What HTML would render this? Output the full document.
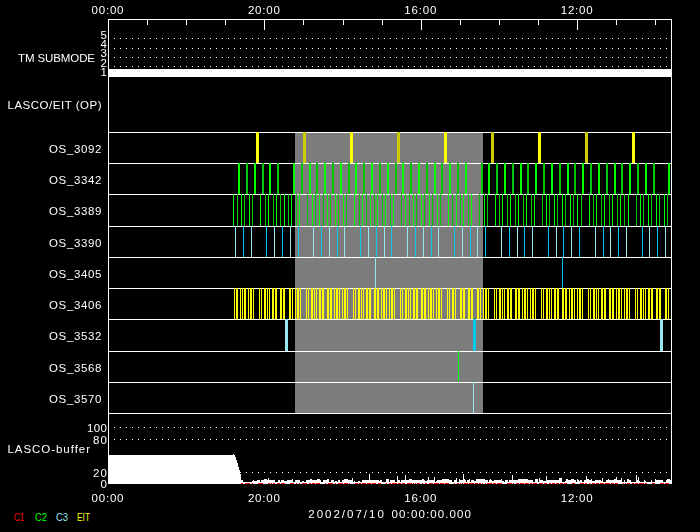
<!DOCTYPE html>
<html><head><meta charset="utf-8"><title>LASCO/EIT schedule</title>
<style>html,body{margin:0;padding:0;background:#000;overflow:hidden}svg{display:block}text{font-family:"Liberation Sans",sans-serif;font-size:11.5px;fill:#fff}</style></head>
<body>
<svg width="700" height="532" viewBox="0 0 700 532">
<rect width="700" height="532" fill="#000"/>
<g shape-rendering="crispEdges">
<rect x="295" y="132" width="188" height="282" fill="#7c7c7c"/>
<rect x="108" y="132" width="564" height="1" fill="#fff"/>
<rect x="108" y="163" width="564" height="1" fill="#fff"/>
<rect x="108" y="194" width="564" height="1" fill="#fff"/>
<rect x="108" y="226" width="564" height="1" fill="#fff"/>
<rect x="108" y="257" width="564" height="1" fill="#fff"/>
<rect x="108" y="288" width="564" height="1" fill="#fff"/>
<rect x="108" y="319" width="564" height="1" fill="#fff"/>
<rect x="108" y="351" width="564" height="1" fill="#fff"/>
<rect x="108" y="382" width="564" height="1" fill="#fff"/>
<rect x="108" y="413" width="564" height="1" fill="#fff"/>
<path fill="#fff" d="M114 38h1v1h-1zM120 38h1v1h-1zM126 38h1v1h-1zM132 38h1v1h-1zM138 38h1v1h-1zM144 38h1v1h-1zM150 38h1v1h-1zM156 38h1v1h-1zM162 38h1v1h-1zM168 38h1v1h-1zM174 38h1v1h-1zM180 38h1v1h-1zM186 38h1v1h-1zM192 38h1v1h-1zM198 38h1v1h-1zM204 38h1v1h-1zM210 38h1v1h-1zM216 38h1v1h-1zM222 38h1v1h-1zM228 38h1v1h-1zM234 38h1v1h-1zM240 38h1v1h-1zM246 38h1v1h-1zM252 38h1v1h-1zM258 38h1v1h-1zM264 38h1v1h-1zM270 38h1v1h-1zM276 38h1v1h-1zM282 38h1v1h-1zM288 38h1v1h-1zM294 38h1v1h-1zM300 38h1v1h-1zM306 38h1v1h-1zM312 38h1v1h-1zM318 38h1v1h-1zM324 38h1v1h-1zM330 38h1v1h-1zM336 38h1v1h-1zM342 38h1v1h-1zM348 38h1v1h-1zM354 38h1v1h-1zM360 38h1v1h-1zM366 38h1v1h-1zM372 38h1v1h-1zM378 38h1v1h-1zM384 38h1v1h-1zM390 38h1v1h-1zM396 38h1v1h-1zM402 38h1v1h-1zM408 38h1v1h-1zM414 38h1v1h-1zM420 38h1v1h-1zM426 38h1v1h-1zM432 38h1v1h-1zM438 38h1v1h-1zM444 38h1v1h-1zM450 38h1v1h-1zM456 38h1v1h-1zM462 38h1v1h-1zM468 38h1v1h-1zM474 38h1v1h-1zM480 38h1v1h-1zM486 38h1v1h-1zM492 38h1v1h-1zM498 38h1v1h-1zM504 38h1v1h-1zM510 38h1v1h-1zM516 38h1v1h-1zM522 38h1v1h-1zM528 38h1v1h-1zM534 38h1v1h-1zM540 38h1v1h-1zM546 38h1v1h-1zM552 38h1v1h-1zM558 38h1v1h-1zM564 38h1v1h-1zM570 38h1v1h-1zM576 38h1v1h-1zM582 38h1v1h-1zM588 38h1v1h-1zM594 38h1v1h-1zM600 38h1v1h-1zM606 38h1v1h-1zM612 38h1v1h-1zM618 38h1v1h-1zM624 38h1v1h-1zM630 38h1v1h-1zM636 38h1v1h-1zM642 38h1v1h-1zM648 38h1v1h-1zM654 38h1v1h-1zM660 38h1v1h-1zM666 38h1v1h-1zM114 48h1v1h-1zM120 48h1v1h-1zM126 48h1v1h-1zM132 48h1v1h-1zM138 48h1v1h-1zM144 48h1v1h-1zM150 48h1v1h-1zM156 48h1v1h-1zM162 48h1v1h-1zM168 48h1v1h-1zM174 48h1v1h-1zM180 48h1v1h-1zM186 48h1v1h-1zM192 48h1v1h-1zM198 48h1v1h-1zM204 48h1v1h-1zM210 48h1v1h-1zM216 48h1v1h-1zM222 48h1v1h-1zM228 48h1v1h-1zM234 48h1v1h-1zM240 48h1v1h-1zM246 48h1v1h-1zM252 48h1v1h-1zM258 48h1v1h-1zM264 48h1v1h-1zM270 48h1v1h-1zM276 48h1v1h-1zM282 48h1v1h-1zM288 48h1v1h-1zM294 48h1v1h-1zM300 48h1v1h-1zM306 48h1v1h-1zM312 48h1v1h-1zM318 48h1v1h-1zM324 48h1v1h-1zM330 48h1v1h-1zM336 48h1v1h-1zM342 48h1v1h-1zM348 48h1v1h-1zM354 48h1v1h-1zM360 48h1v1h-1zM366 48h1v1h-1zM372 48h1v1h-1zM378 48h1v1h-1zM384 48h1v1h-1zM390 48h1v1h-1zM396 48h1v1h-1zM402 48h1v1h-1zM408 48h1v1h-1zM414 48h1v1h-1zM420 48h1v1h-1zM426 48h1v1h-1zM432 48h1v1h-1zM438 48h1v1h-1zM444 48h1v1h-1zM450 48h1v1h-1zM456 48h1v1h-1zM462 48h1v1h-1zM468 48h1v1h-1zM474 48h1v1h-1zM480 48h1v1h-1zM486 48h1v1h-1zM492 48h1v1h-1zM498 48h1v1h-1zM504 48h1v1h-1zM510 48h1v1h-1zM516 48h1v1h-1zM522 48h1v1h-1zM528 48h1v1h-1zM534 48h1v1h-1zM540 48h1v1h-1zM546 48h1v1h-1zM552 48h1v1h-1zM558 48h1v1h-1zM564 48h1v1h-1zM570 48h1v1h-1zM576 48h1v1h-1zM582 48h1v1h-1zM588 48h1v1h-1zM594 48h1v1h-1zM600 48h1v1h-1zM606 48h1v1h-1zM612 48h1v1h-1zM618 48h1v1h-1zM624 48h1v1h-1zM630 48h1v1h-1zM636 48h1v1h-1zM642 48h1v1h-1zM648 48h1v1h-1zM654 48h1v1h-1zM660 48h1v1h-1zM666 48h1v1h-1zM114 57h1v1h-1zM120 57h1v1h-1zM126 57h1v1h-1zM132 57h1v1h-1zM138 57h1v1h-1zM144 57h1v1h-1zM150 57h1v1h-1zM156 57h1v1h-1zM162 57h1v1h-1zM168 57h1v1h-1zM174 57h1v1h-1zM180 57h1v1h-1zM186 57h1v1h-1zM192 57h1v1h-1zM198 57h1v1h-1zM204 57h1v1h-1zM210 57h1v1h-1zM216 57h1v1h-1zM222 57h1v1h-1zM228 57h1v1h-1zM234 57h1v1h-1zM240 57h1v1h-1zM246 57h1v1h-1zM252 57h1v1h-1zM258 57h1v1h-1zM264 57h1v1h-1zM270 57h1v1h-1zM276 57h1v1h-1zM282 57h1v1h-1zM288 57h1v1h-1zM294 57h1v1h-1zM300 57h1v1h-1zM306 57h1v1h-1zM312 57h1v1h-1zM318 57h1v1h-1zM324 57h1v1h-1zM330 57h1v1h-1zM336 57h1v1h-1zM342 57h1v1h-1zM348 57h1v1h-1zM354 57h1v1h-1zM360 57h1v1h-1zM366 57h1v1h-1zM372 57h1v1h-1zM378 57h1v1h-1zM384 57h1v1h-1zM390 57h1v1h-1zM396 57h1v1h-1zM402 57h1v1h-1zM408 57h1v1h-1zM414 57h1v1h-1zM420 57h1v1h-1zM426 57h1v1h-1zM432 57h1v1h-1zM438 57h1v1h-1zM444 57h1v1h-1zM450 57h1v1h-1zM456 57h1v1h-1zM462 57h1v1h-1zM468 57h1v1h-1zM474 57h1v1h-1zM480 57h1v1h-1zM486 57h1v1h-1zM492 57h1v1h-1zM498 57h1v1h-1zM504 57h1v1h-1zM510 57h1v1h-1zM516 57h1v1h-1zM522 57h1v1h-1zM528 57h1v1h-1zM534 57h1v1h-1zM540 57h1v1h-1zM546 57h1v1h-1zM552 57h1v1h-1zM558 57h1v1h-1zM564 57h1v1h-1zM570 57h1v1h-1zM576 57h1v1h-1zM582 57h1v1h-1zM588 57h1v1h-1zM594 57h1v1h-1zM600 57h1v1h-1zM606 57h1v1h-1zM612 57h1v1h-1zM618 57h1v1h-1zM624 57h1v1h-1zM630 57h1v1h-1zM636 57h1v1h-1zM642 57h1v1h-1zM648 57h1v1h-1zM654 57h1v1h-1zM660 57h1v1h-1zM666 57h1v1h-1zM114 66h1v1h-1zM120 66h1v1h-1zM126 66h1v1h-1zM132 66h1v1h-1zM138 66h1v1h-1zM144 66h1v1h-1zM150 66h1v1h-1zM156 66h1v1h-1zM162 66h1v1h-1zM168 66h1v1h-1zM174 66h1v1h-1zM180 66h1v1h-1zM186 66h1v1h-1zM192 66h1v1h-1zM198 66h1v1h-1zM204 66h1v1h-1zM210 66h1v1h-1zM216 66h1v1h-1zM222 66h1v1h-1zM228 66h1v1h-1zM234 66h1v1h-1zM240 66h1v1h-1zM246 66h1v1h-1zM252 66h1v1h-1zM258 66h1v1h-1zM264 66h1v1h-1zM270 66h1v1h-1zM276 66h1v1h-1zM282 66h1v1h-1zM288 66h1v1h-1zM294 66h1v1h-1zM300 66h1v1h-1zM306 66h1v1h-1zM312 66h1v1h-1zM318 66h1v1h-1zM324 66h1v1h-1zM330 66h1v1h-1zM336 66h1v1h-1zM342 66h1v1h-1zM348 66h1v1h-1zM354 66h1v1h-1zM360 66h1v1h-1zM366 66h1v1h-1zM372 66h1v1h-1zM378 66h1v1h-1zM384 66h1v1h-1zM390 66h1v1h-1zM396 66h1v1h-1zM402 66h1v1h-1zM408 66h1v1h-1zM414 66h1v1h-1zM420 66h1v1h-1zM426 66h1v1h-1zM432 66h1v1h-1zM438 66h1v1h-1zM444 66h1v1h-1zM450 66h1v1h-1zM456 66h1v1h-1zM462 66h1v1h-1zM468 66h1v1h-1zM474 66h1v1h-1zM480 66h1v1h-1zM486 66h1v1h-1zM492 66h1v1h-1zM498 66h1v1h-1zM504 66h1v1h-1zM510 66h1v1h-1zM516 66h1v1h-1zM522 66h1v1h-1zM528 66h1v1h-1zM534 66h1v1h-1zM540 66h1v1h-1zM546 66h1v1h-1zM552 66h1v1h-1zM558 66h1v1h-1zM564 66h1v1h-1zM570 66h1v1h-1zM576 66h1v1h-1zM582 66h1v1h-1zM588 66h1v1h-1zM594 66h1v1h-1zM600 66h1v1h-1zM606 66h1v1h-1zM612 66h1v1h-1zM618 66h1v1h-1zM624 66h1v1h-1zM630 66h1v1h-1zM636 66h1v1h-1zM642 66h1v1h-1zM648 66h1v1h-1zM654 66h1v1h-1zM660 66h1v1h-1zM666 66h1v1h-1zM114 427h1v1h-1zM120 427h1v1h-1zM126 427h1v1h-1zM132 427h1v1h-1zM138 427h1v1h-1zM144 427h1v1h-1zM150 427h1v1h-1zM156 427h1v1h-1zM162 427h1v1h-1zM168 427h1v1h-1zM174 427h1v1h-1zM180 427h1v1h-1zM186 427h1v1h-1zM192 427h1v1h-1zM198 427h1v1h-1zM204 427h1v1h-1zM210 427h1v1h-1zM216 427h1v1h-1zM222 427h1v1h-1zM228 427h1v1h-1zM234 427h1v1h-1zM240 427h1v1h-1zM246 427h1v1h-1zM252 427h1v1h-1zM258 427h1v1h-1zM264 427h1v1h-1zM270 427h1v1h-1zM276 427h1v1h-1zM282 427h1v1h-1zM288 427h1v1h-1zM294 427h1v1h-1zM300 427h1v1h-1zM306 427h1v1h-1zM312 427h1v1h-1zM318 427h1v1h-1zM324 427h1v1h-1zM330 427h1v1h-1zM336 427h1v1h-1zM342 427h1v1h-1zM348 427h1v1h-1zM354 427h1v1h-1zM360 427h1v1h-1zM366 427h1v1h-1zM372 427h1v1h-1zM378 427h1v1h-1zM384 427h1v1h-1zM390 427h1v1h-1zM396 427h1v1h-1zM402 427h1v1h-1zM408 427h1v1h-1zM414 427h1v1h-1zM420 427h1v1h-1zM426 427h1v1h-1zM432 427h1v1h-1zM438 427h1v1h-1zM444 427h1v1h-1zM450 427h1v1h-1zM456 427h1v1h-1zM462 427h1v1h-1zM468 427h1v1h-1zM474 427h1v1h-1zM480 427h1v1h-1zM486 427h1v1h-1zM492 427h1v1h-1zM498 427h1v1h-1zM504 427h1v1h-1zM510 427h1v1h-1zM516 427h1v1h-1zM522 427h1v1h-1zM528 427h1v1h-1zM534 427h1v1h-1zM540 427h1v1h-1zM546 427h1v1h-1zM552 427h1v1h-1zM558 427h1v1h-1zM564 427h1v1h-1zM570 427h1v1h-1zM576 427h1v1h-1zM582 427h1v1h-1zM588 427h1v1h-1zM594 427h1v1h-1zM600 427h1v1h-1zM606 427h1v1h-1zM612 427h1v1h-1zM618 427h1v1h-1zM624 427h1v1h-1zM630 427h1v1h-1zM636 427h1v1h-1zM642 427h1v1h-1zM648 427h1v1h-1zM654 427h1v1h-1zM660 427h1v1h-1zM666 427h1v1h-1zM114 439h1v1h-1zM120 439h1v1h-1zM126 439h1v1h-1zM132 439h1v1h-1zM138 439h1v1h-1zM144 439h1v1h-1zM150 439h1v1h-1zM156 439h1v1h-1zM162 439h1v1h-1zM168 439h1v1h-1zM174 439h1v1h-1zM180 439h1v1h-1zM186 439h1v1h-1zM192 439h1v1h-1zM198 439h1v1h-1zM204 439h1v1h-1zM210 439h1v1h-1zM216 439h1v1h-1zM222 439h1v1h-1zM228 439h1v1h-1zM234 439h1v1h-1zM240 439h1v1h-1zM246 439h1v1h-1zM252 439h1v1h-1zM258 439h1v1h-1zM264 439h1v1h-1zM270 439h1v1h-1zM276 439h1v1h-1zM282 439h1v1h-1zM288 439h1v1h-1zM294 439h1v1h-1zM300 439h1v1h-1zM306 439h1v1h-1zM312 439h1v1h-1zM318 439h1v1h-1zM324 439h1v1h-1zM330 439h1v1h-1zM336 439h1v1h-1zM342 439h1v1h-1zM348 439h1v1h-1zM354 439h1v1h-1zM360 439h1v1h-1zM366 439h1v1h-1zM372 439h1v1h-1zM378 439h1v1h-1zM384 439h1v1h-1zM390 439h1v1h-1zM396 439h1v1h-1zM402 439h1v1h-1zM408 439h1v1h-1zM414 439h1v1h-1zM420 439h1v1h-1zM426 439h1v1h-1zM432 439h1v1h-1zM438 439h1v1h-1zM444 439h1v1h-1zM450 439h1v1h-1zM456 439h1v1h-1zM462 439h1v1h-1zM468 439h1v1h-1zM474 439h1v1h-1zM480 439h1v1h-1zM486 439h1v1h-1zM492 439h1v1h-1zM498 439h1v1h-1zM504 439h1v1h-1zM510 439h1v1h-1zM516 439h1v1h-1zM522 439h1v1h-1zM528 439h1v1h-1zM534 439h1v1h-1zM540 439h1v1h-1zM546 439h1v1h-1zM552 439h1v1h-1zM558 439h1v1h-1zM564 439h1v1h-1zM570 439h1v1h-1zM576 439h1v1h-1zM582 439h1v1h-1zM588 439h1v1h-1zM594 439h1v1h-1zM600 439h1v1h-1zM606 439h1v1h-1zM612 439h1v1h-1zM618 439h1v1h-1zM624 439h1v1h-1zM630 439h1v1h-1zM636 439h1v1h-1zM642 439h1v1h-1zM648 439h1v1h-1zM654 439h1v1h-1zM660 439h1v1h-1zM666 439h1v1h-1zM240 472h1v1h-1zM246 472h1v1h-1zM252 472h1v1h-1zM258 472h1v1h-1zM264 472h1v1h-1zM270 472h1v1h-1zM276 472h1v1h-1zM282 472h1v1h-1zM288 472h1v1h-1zM294 472h1v1h-1zM300 472h1v1h-1zM306 472h1v1h-1zM312 472h1v1h-1zM318 472h1v1h-1zM324 472h1v1h-1zM330 472h1v1h-1zM336 472h1v1h-1zM342 472h1v1h-1zM348 472h1v1h-1zM354 472h1v1h-1zM360 472h1v1h-1zM366 472h1v1h-1zM372 472h1v1h-1zM378 472h1v1h-1zM384 472h1v1h-1zM390 472h1v1h-1zM396 472h1v1h-1zM402 472h1v1h-1zM408 472h1v1h-1zM414 472h1v1h-1zM420 472h1v1h-1zM426 472h1v1h-1zM432 472h1v1h-1zM438 472h1v1h-1zM444 472h1v1h-1zM450 472h1v1h-1zM456 472h1v1h-1zM462 472h1v1h-1zM468 472h1v1h-1zM474 472h1v1h-1zM480 472h1v1h-1zM486 472h1v1h-1zM492 472h1v1h-1zM498 472h1v1h-1zM504 472h1v1h-1zM510 472h1v1h-1zM516 472h1v1h-1zM522 472h1v1h-1zM528 472h1v1h-1zM534 472h1v1h-1zM540 472h1v1h-1zM546 472h1v1h-1zM552 472h1v1h-1zM558 472h1v1h-1zM564 472h1v1h-1zM570 472h1v1h-1zM576 472h1v1h-1zM582 472h1v1h-1zM588 472h1v1h-1zM594 472h1v1h-1zM600 472h1v1h-1zM606 472h1v1h-1zM612 472h1v1h-1zM618 472h1v1h-1zM624 472h1v1h-1zM630 472h1v1h-1zM636 472h1v1h-1zM642 472h1v1h-1zM648 472h1v1h-1zM654 472h1v1h-1zM660 472h1v1h-1zM666 472h1v1h-1z"/>
<rect x="108" y="69" width="564" height="8" fill="#fff"/>
<rect x="256" y="132" width="3" height="31" fill="#ffff00"/>
<rect x="303" y="132" width="3" height="31" fill="#cccc00"/>
<rect x="350" y="132" width="3" height="31" fill="#ffff00"/>
<rect x="397" y="132" width="3" height="31" fill="#cccc00"/>
<rect x="444" y="132" width="3" height="31" fill="#ffff00"/>
<rect x="491" y="132" width="3" height="31" fill="#cccc00"/>
<rect x="538" y="132" width="3" height="31" fill="#ffff00"/>
<rect x="585" y="132" width="3" height="31" fill="#cccc00"/>
<rect x="632" y="132" width="3" height="31" fill="#ffff00"/>
<rect x="238" y="163" width="2" height="31" fill="#00ff00"/>
<rect x="246" y="163" width="2" height="31" fill="#00c800"/>
<rect x="254" y="163" width="2" height="31" fill="#00ff00"/>
<rect x="262" y="163" width="2" height="31" fill="#00c800"/>
<rect x="269" y="163" width="2" height="31" fill="#00ff00"/>
<rect x="277" y="163" width="2" height="31" fill="#00c800"/>
<rect x="293" y="163" width="2" height="31" fill="#00ff00"/>
<rect x="301" y="163" width="2" height="31" fill="#00c800"/>
<rect x="309" y="163" width="2" height="31" fill="#00ff00"/>
<rect x="316" y="163" width="2" height="31" fill="#00c800"/>
<rect x="324" y="163" width="2" height="31" fill="#00ff00"/>
<rect x="332" y="163" width="2" height="31" fill="#00c800"/>
<rect x="340" y="163" width="2" height="31" fill="#00ff00"/>
<rect x="348" y="163" width="2" height="31" fill="#00c800"/>
<rect x="355" y="163" width="2" height="31" fill="#00ff00"/>
<rect x="363" y="163" width="2" height="31" fill="#00c800"/>
<rect x="371" y="163" width="2" height="31" fill="#00ff00"/>
<rect x="379" y="163" width="2" height="31" fill="#00c800"/>
<rect x="387" y="163" width="2" height="31" fill="#00ff00"/>
<rect x="395" y="163" width="2" height="31" fill="#00c800"/>
<rect x="402" y="163" width="2" height="31" fill="#00ff00"/>
<rect x="410" y="163" width="2" height="31" fill="#00c800"/>
<rect x="418" y="163" width="2" height="31" fill="#00ff00"/>
<rect x="426" y="163" width="2" height="31" fill="#00c800"/>
<rect x="434" y="163" width="2" height="31" fill="#00ff00"/>
<rect x="441" y="163" width="2" height="31" fill="#00c800"/>
<rect x="449" y="163" width="2" height="31" fill="#00ff00"/>
<rect x="457" y="163" width="2" height="31" fill="#00c800"/>
<rect x="465" y="163" width="2" height="31" fill="#00ff00"/>
<rect x="481" y="163" width="2" height="31" fill="#00c800"/>
<rect x="488" y="163" width="2" height="31" fill="#00ff00"/>
<rect x="496" y="163" width="2" height="31" fill="#00c800"/>
<rect x="504" y="163" width="2" height="31" fill="#00ff00"/>
<rect x="512" y="163" width="2" height="31" fill="#00c800"/>
<rect x="520" y="163" width="2" height="31" fill="#00ff00"/>
<rect x="527" y="163" width="2" height="31" fill="#00c800"/>
<rect x="535" y="163" width="2" height="31" fill="#00ff00"/>
<rect x="543" y="163" width="2" height="31" fill="#00c800"/>
<rect x="551" y="163" width="2" height="31" fill="#00ff00"/>
<rect x="559" y="163" width="2" height="31" fill="#00c800"/>
<rect x="567" y="163" width="2" height="31" fill="#00ff00"/>
<rect x="574" y="163" width="2" height="31" fill="#00c800"/>
<rect x="582" y="163" width="2" height="31" fill="#00ff00"/>
<rect x="590" y="163" width="2" height="31" fill="#00c800"/>
<rect x="598" y="163" width="2" height="31" fill="#00ff00"/>
<rect x="606" y="163" width="2" height="31" fill="#00c800"/>
<rect x="614" y="163" width="2" height="31" fill="#00ff00"/>
<rect x="621" y="163" width="2" height="31" fill="#00c800"/>
<rect x="629" y="163" width="2" height="31" fill="#00ff00"/>
<rect x="637" y="163" width="2" height="31" fill="#00c800"/>
<rect x="645" y="163" width="2" height="31" fill="#00ff00"/>
<rect x="653" y="163" width="2" height="31" fill="#00c800"/>
<rect x="668" y="163" width="2" height="31" fill="#00ff00"/>
<rect x="233" y="194" width="1" height="32" fill="#00ff00"/>
<rect x="237" y="194" width="1" height="32" fill="#00c800"/>
<rect x="241" y="194" width="1" height="32" fill="#00ff00"/>
<rect x="244" y="194" width="1" height="32" fill="#00c800"/>
<rect x="249" y="194" width="1" height="32" fill="#00ff00"/>
<rect x="252" y="194" width="1" height="32" fill="#00c800"/>
<rect x="260" y="194" width="1" height="32" fill="#00ff00"/>
<rect x="265" y="194" width="1" height="32" fill="#00c800"/>
<rect x="268" y="194" width="1" height="32" fill="#00ff00"/>
<rect x="273" y="194" width="1" height="32" fill="#00c800"/>
<rect x="276" y="194" width="1" height="32" fill="#00ff00"/>
<rect x="280" y="194" width="1" height="32" fill="#00c800"/>
<rect x="284" y="194" width="1" height="32" fill="#00ff00"/>
<rect x="288" y="194" width="1" height="32" fill="#00c800"/>
<rect x="291" y="194" width="1" height="32" fill="#00ff00"/>
<rect x="296" y="194" width="1" height="32" fill="#00c800"/>
<rect x="299" y="194" width="1" height="32" fill="#00ff00"/>
<rect x="307" y="194" width="1" height="32" fill="#00c800"/>
<rect x="312" y="194" width="1" height="32" fill="#00ff00"/>
<rect x="315" y="194" width="1" height="32" fill="#00c800"/>
<rect x="319" y="194" width="1" height="32" fill="#00ff00"/>
<rect x="323" y="194" width="1" height="32" fill="#00c800"/>
<rect x="327" y="194" width="1" height="32" fill="#00ff00"/>
<rect x="330" y="194" width="1" height="32" fill="#00c800"/>
<rect x="335" y="194" width="1" height="32" fill="#00ff00"/>
<rect x="338" y="194" width="1" height="32" fill="#00c800"/>
<rect x="343" y="194" width="1" height="32" fill="#00ff00"/>
<rect x="346" y="194" width="1" height="32" fill="#00c800"/>
<rect x="354" y="194" width="1" height="32" fill="#00ff00"/>
<rect x="359" y="194" width="1" height="32" fill="#00c800"/>
<rect x="362" y="194" width="1" height="32" fill="#00ff00"/>
<rect x="366" y="194" width="1" height="32" fill="#00c800"/>
<rect x="370" y="194" width="1" height="32" fill="#00ff00"/>
<rect x="374" y="194" width="1" height="32" fill="#00c800"/>
<rect x="377" y="194" width="1" height="32" fill="#00ff00"/>
<rect x="382" y="194" width="1" height="32" fill="#00c800"/>
<rect x="385" y="194" width="1" height="32" fill="#00ff00"/>
<rect x="390" y="194" width="1" height="32" fill="#00c800"/>
<rect x="393" y="194" width="1" height="32" fill="#00ff00"/>
<rect x="401" y="194" width="1" height="32" fill="#00c800"/>
<rect x="405" y="194" width="1" height="32" fill="#00ff00"/>
<rect x="409" y="194" width="1" height="32" fill="#00c800"/>
<rect x="413" y="194" width="1" height="32" fill="#00ff00"/>
<rect x="416" y="194" width="1" height="32" fill="#00c800"/>
<rect x="421" y="194" width="1" height="32" fill="#00ff00"/>
<rect x="424" y="194" width="1" height="32" fill="#00c800"/>
<rect x="429" y="194" width="1" height="32" fill="#00ff00"/>
<rect x="432" y="194" width="1" height="32" fill="#00c800"/>
<rect x="437" y="194" width="1" height="32" fill="#00ff00"/>
<rect x="440" y="194" width="1" height="32" fill="#00c800"/>
<rect x="448" y="194" width="1" height="32" fill="#00ff00"/>
<rect x="452" y="194" width="1" height="32" fill="#00c800"/>
<rect x="456" y="194" width="1" height="32" fill="#00ff00"/>
<rect x="460" y="194" width="1" height="32" fill="#00c800"/>
<rect x="463" y="194" width="1" height="32" fill="#00ff00"/>
<rect x="468" y="194" width="1" height="32" fill="#00c800"/>
<rect x="471" y="194" width="1" height="32" fill="#00ff00"/>
<rect x="479" y="194" width="1" height="32" fill="#00c800"/>
<rect x="484" y="194" width="1" height="32" fill="#00ff00"/>
<rect x="487" y="194" width="1" height="32" fill="#00c800"/>
<rect x="495" y="194" width="1" height="32" fill="#00ff00"/>
<rect x="499" y="194" width="1" height="32" fill="#00c800"/>
<rect x="502" y="194" width="1" height="32" fill="#00ff00"/>
<rect x="507" y="194" width="1" height="32" fill="#00c800"/>
<rect x="510" y="194" width="1" height="32" fill="#00ff00"/>
<rect x="515" y="194" width="1" height="32" fill="#00c800"/>
<rect x="518" y="194" width="1" height="32" fill="#00ff00"/>
<rect x="523" y="194" width="1" height="32" fill="#00c800"/>
<rect x="526" y="194" width="1" height="32" fill="#00ff00"/>
<rect x="531" y="194" width="1" height="32" fill="#00c800"/>
<rect x="534" y="194" width="1" height="32" fill="#00ff00"/>
<rect x="542" y="194" width="1" height="32" fill="#00c800"/>
<rect x="546" y="194" width="1" height="32" fill="#00ff00"/>
<rect x="549" y="194" width="1" height="32" fill="#00c800"/>
<rect x="554" y="194" width="1" height="32" fill="#00ff00"/>
<rect x="557" y="194" width="1" height="32" fill="#00c800"/>
<rect x="562" y="194" width="1" height="32" fill="#00ff00"/>
<rect x="565" y="194" width="1" height="32" fill="#00c800"/>
<rect x="570" y="194" width="1" height="32" fill="#00ff00"/>
<rect x="573" y="194" width="1" height="32" fill="#00c800"/>
<rect x="577" y="194" width="1" height="32" fill="#00ff00"/>
<rect x="581" y="194" width="1" height="32" fill="#00c800"/>
<rect x="589" y="194" width="1" height="32" fill="#00ff00"/>
<rect x="593" y="194" width="1" height="32" fill="#00c800"/>
<rect x="596" y="194" width="1" height="32" fill="#00ff00"/>
<rect x="601" y="194" width="1" height="32" fill="#00c800"/>
<rect x="604" y="194" width="1" height="32" fill="#00ff00"/>
<rect x="609" y="194" width="1" height="32" fill="#00c800"/>
<rect x="612" y="194" width="1" height="32" fill="#00ff00"/>
<rect x="617" y="194" width="1" height="32" fill="#00c800"/>
<rect x="620" y="194" width="1" height="32" fill="#00ff00"/>
<rect x="624" y="194" width="1" height="32" fill="#00c800"/>
<rect x="628" y="194" width="1" height="32" fill="#00ff00"/>
<rect x="636" y="194" width="1" height="32" fill="#00c800"/>
<rect x="640" y="194" width="1" height="32" fill="#00ff00"/>
<rect x="643" y="194" width="1" height="32" fill="#00c800"/>
<rect x="648" y="194" width="1" height="32" fill="#00ff00"/>
<rect x="651" y="194" width="1" height="32" fill="#00c800"/>
<rect x="656" y="194" width="1" height="32" fill="#00ff00"/>
<rect x="659" y="194" width="1" height="32" fill="#00c800"/>
<rect x="664" y="194" width="1" height="32" fill="#00ff00"/>
<rect x="667" y="194" width="1" height="32" fill="#00c800"/>
<rect x="235" y="226" width="1" height="31" fill="#96e6f0"/>
<rect x="243" y="226" width="1" height="31" fill="#0ac8eb"/>
<rect x="251" y="226" width="1" height="31" fill="#96e6f0"/>
<rect x="266" y="226" width="1" height="31" fill="#0ac8eb"/>
<rect x="274" y="226" width="1" height="31" fill="#96e6f0"/>
<rect x="282" y="226" width="1" height="31" fill="#0ac8eb"/>
<rect x="290" y="226" width="1" height="31" fill="#96e6f0"/>
<rect x="298" y="226" width="1" height="31" fill="#0ac8eb"/>
<rect x="313" y="226" width="1" height="31" fill="#96e6f0"/>
<rect x="321" y="226" width="1" height="31" fill="#0ac8eb"/>
<rect x="329" y="226" width="1" height="31" fill="#96e6f0"/>
<rect x="337" y="226" width="1" height="31" fill="#0ac8eb"/>
<rect x="344" y="226" width="1" height="31" fill="#96e6f0"/>
<rect x="360" y="226" width="1" height="31" fill="#0ac8eb"/>
<rect x="368" y="226" width="1" height="31" fill="#96e6f0"/>
<rect x="376" y="226" width="1" height="31" fill="#0ac8eb"/>
<rect x="384" y="226" width="1" height="31" fill="#96e6f0"/>
<rect x="391" y="226" width="1" height="31" fill="#0ac8eb"/>
<rect x="407" y="226" width="1" height="31" fill="#96e6f0"/>
<rect x="415" y="226" width="1" height="31" fill="#0ac8eb"/>
<rect x="423" y="226" width="1" height="31" fill="#96e6f0"/>
<rect x="431" y="226" width="1" height="31" fill="#0ac8eb"/>
<rect x="438" y="226" width="1" height="31" fill="#96e6f0"/>
<rect x="454" y="226" width="1" height="31" fill="#0ac8eb"/>
<rect x="462" y="226" width="1" height="31" fill="#96e6f0"/>
<rect x="470" y="226" width="1" height="31" fill="#0ac8eb"/>
<rect x="477" y="226" width="1" height="31" fill="#96e6f0"/>
<rect x="485" y="226" width="1" height="31" fill="#0ac8eb"/>
<rect x="501" y="226" width="1" height="31" fill="#96e6f0"/>
<rect x="509" y="226" width="1" height="31" fill="#0ac8eb"/>
<rect x="517" y="226" width="1" height="31" fill="#96e6f0"/>
<rect x="524" y="226" width="1" height="31" fill="#0ac8eb"/>
<rect x="532" y="226" width="1" height="31" fill="#96e6f0"/>
<rect x="548" y="226" width="1" height="31" fill="#0ac8eb"/>
<rect x="556" y="226" width="1" height="31" fill="#96e6f0"/>
<rect x="563" y="226" width="1" height="31" fill="#0ac8eb"/>
<rect x="571" y="226" width="1" height="31" fill="#96e6f0"/>
<rect x="579" y="226" width="1" height="31" fill="#0ac8eb"/>
<rect x="595" y="226" width="1" height="31" fill="#96e6f0"/>
<rect x="603" y="226" width="1" height="31" fill="#0ac8eb"/>
<rect x="610" y="226" width="1" height="31" fill="#96e6f0"/>
<rect x="618" y="226" width="1" height="31" fill="#0ac8eb"/>
<rect x="626" y="226" width="1" height="31" fill="#96e6f0"/>
<rect x="642" y="226" width="1" height="31" fill="#0ac8eb"/>
<rect x="649" y="226" width="1" height="31" fill="#96e6f0"/>
<rect x="657" y="226" width="1" height="31" fill="#0ac8eb"/>
<rect x="665" y="226" width="1" height="31" fill="#96e6f0"/>
<rect x="375" y="257" width="1" height="31" fill="#96e6f0"/>
<rect x="562" y="257" width="1" height="31" fill="#0ac8eb"/>
<rect x="259" y="288" width="1" height="31" fill="#ffff00"/>
<rect x="261" y="288" width="1" height="31" fill="#ffff00"/>
<rect x="264" y="288" width="2" height="31" fill="#ffff00"/>
<rect x="267" y="288" width="1" height="31" fill="#ffff00"/>
<rect x="269" y="288" width="1" height="31" fill="#ffff00"/>
<rect x="272" y="288" width="2" height="31" fill="#ffff00"/>
<rect x="275" y="288" width="2" height="31" fill="#ffff00"/>
<rect x="280" y="288" width="2" height="31" fill="#ffff00"/>
<rect x="283" y="288" width="2" height="31" fill="#ffff00"/>
<rect x="289" y="288" width="2" height="31" fill="#ffff00"/>
<rect x="292" y="288" width="1" height="31" fill="#ffff00"/>
<rect x="295" y="288" width="1" height="31" fill="#ffff00"/>
<rect x="297" y="288" width="2" height="31" fill="#ffff00"/>
<rect x="300" y="288" width="1" height="31" fill="#ffff00"/>
<rect x="306" y="288" width="1" height="31" fill="#ffff00"/>
<rect x="308" y="288" width="1" height="31" fill="#ffff00"/>
<rect x="311" y="288" width="2" height="31" fill="#ffff00"/>
<rect x="314" y="288" width="1" height="31" fill="#ffff00"/>
<rect x="316" y="288" width="1" height="31" fill="#ffff00"/>
<rect x="319" y="288" width="2" height="31" fill="#ffff00"/>
<rect x="322" y="288" width="2" height="31" fill="#ffff00"/>
<rect x="327" y="288" width="2" height="31" fill="#ffff00"/>
<rect x="330" y="288" width="2" height="31" fill="#ffff00"/>
<rect x="334" y="288" width="1" height="31" fill="#ffff00"/>
<rect x="336" y="288" width="2" height="31" fill="#ffff00"/>
<rect x="339" y="288" width="1" height="31" fill="#ffff00"/>
<rect x="342" y="288" width="1" height="31" fill="#ffff00"/>
<rect x="344" y="288" width="2" height="31" fill="#ffff00"/>
<rect x="347" y="288" width="1" height="31" fill="#ffff00"/>
<rect x="353" y="288" width="1" height="31" fill="#ffff00"/>
<rect x="355" y="288" width="1" height="31" fill="#ffff00"/>
<rect x="358" y="288" width="2" height="31" fill="#ffff00"/>
<rect x="361" y="288" width="1" height="31" fill="#ffff00"/>
<rect x="363" y="288" width="1" height="31" fill="#ffff00"/>
<rect x="366" y="288" width="2" height="31" fill="#ffff00"/>
<rect x="369" y="288" width="2" height="31" fill="#ffff00"/>
<rect x="374" y="288" width="2" height="31" fill="#ffff00"/>
<rect x="377" y="288" width="2" height="31" fill="#ffff00"/>
<rect x="381" y="288" width="1" height="31" fill="#ffff00"/>
<rect x="383" y="288" width="2" height="31" fill="#ffff00"/>
<rect x="386" y="288" width="1" height="31" fill="#ffff00"/>
<rect x="389" y="288" width="1" height="31" fill="#ffff00"/>
<rect x="391" y="288" width="2" height="31" fill="#ffff00"/>
<rect x="394" y="288" width="1" height="31" fill="#ffff00"/>
<rect x="400" y="288" width="1" height="31" fill="#ffff00"/>
<rect x="402" y="288" width="1" height="31" fill="#ffff00"/>
<rect x="405" y="288" width="2" height="31" fill="#ffff00"/>
<rect x="408" y="288" width="1" height="31" fill="#ffff00"/>
<rect x="410" y="288" width="1" height="31" fill="#ffff00"/>
<rect x="413" y="288" width="2" height="31" fill="#ffff00"/>
<rect x="416" y="288" width="2" height="31" fill="#ffff00"/>
<rect x="421" y="288" width="2" height="31" fill="#ffff00"/>
<rect x="424" y="288" width="2" height="31" fill="#ffff00"/>
<rect x="428" y="288" width="1" height="31" fill="#ffff00"/>
<rect x="430" y="288" width="2" height="31" fill="#ffff00"/>
<rect x="433" y="288" width="1" height="31" fill="#ffff00"/>
<rect x="436" y="288" width="1" height="31" fill="#ffff00"/>
<rect x="438" y="288" width="2" height="31" fill="#ffff00"/>
<rect x="441" y="288" width="1" height="31" fill="#ffff00"/>
<rect x="447" y="288" width="1" height="31" fill="#ffff00"/>
<rect x="449" y="288" width="1" height="31" fill="#ffff00"/>
<rect x="452" y="288" width="2" height="31" fill="#ffff00"/>
<rect x="455" y="288" width="1" height="31" fill="#ffff00"/>
<rect x="460" y="288" width="2" height="31" fill="#ffff00"/>
<rect x="463" y="288" width="2" height="31" fill="#ffff00"/>
<rect x="468" y="288" width="2" height="31" fill="#ffff00"/>
<rect x="471" y="288" width="2" height="31" fill="#ffff00"/>
<rect x="477" y="288" width="2" height="31" fill="#ffff00"/>
<rect x="480" y="288" width="1" height="31" fill="#ffff00"/>
<rect x="483" y="288" width="1" height="31" fill="#ffff00"/>
<rect x="485" y="288" width="2" height="31" fill="#ffff00"/>
<rect x="488" y="288" width="1" height="31" fill="#ffff00"/>
<rect x="494" y="288" width="1" height="31" fill="#ffff00"/>
<rect x="496" y="288" width="1" height="31" fill="#ffff00"/>
<rect x="499" y="288" width="2" height="31" fill="#ffff00"/>
<rect x="502" y="288" width="1" height="31" fill="#ffff00"/>
<rect x="504" y="288" width="1" height="31" fill="#ffff00"/>
<rect x="507" y="288" width="2" height="31" fill="#ffff00"/>
<rect x="510" y="288" width="2" height="31" fill="#ffff00"/>
<rect x="515" y="288" width="2" height="31" fill="#ffff00"/>
<rect x="518" y="288" width="2" height="31" fill="#ffff00"/>
<rect x="522" y="288" width="1" height="31" fill="#ffff00"/>
<rect x="524" y="288" width="2" height="31" fill="#ffff00"/>
<rect x="527" y="288" width="1" height="31" fill="#ffff00"/>
<rect x="530" y="288" width="1" height="31" fill="#ffff00"/>
<rect x="532" y="288" width="2" height="31" fill="#ffff00"/>
<rect x="535" y="288" width="1" height="31" fill="#ffff00"/>
<rect x="541" y="288" width="1" height="31" fill="#ffff00"/>
<rect x="543" y="288" width="1" height="31" fill="#ffff00"/>
<rect x="546" y="288" width="2" height="31" fill="#ffff00"/>
<rect x="549" y="288" width="1" height="31" fill="#ffff00"/>
<rect x="551" y="288" width="1" height="31" fill="#ffff00"/>
<rect x="554" y="288" width="2" height="31" fill="#ffff00"/>
<rect x="557" y="288" width="2" height="31" fill="#ffff00"/>
<rect x="562" y="288" width="2" height="31" fill="#ffff00"/>
<rect x="565" y="288" width="2" height="31" fill="#ffff00"/>
<rect x="569" y="288" width="1" height="31" fill="#ffff00"/>
<rect x="571" y="288" width="2" height="31" fill="#ffff00"/>
<rect x="574" y="288" width="1" height="31" fill="#ffff00"/>
<rect x="577" y="288" width="1" height="31" fill="#ffff00"/>
<rect x="579" y="288" width="2" height="31" fill="#ffff00"/>
<rect x="582" y="288" width="1" height="31" fill="#ffff00"/>
<rect x="588" y="288" width="1" height="31" fill="#ffff00"/>
<rect x="590" y="288" width="1" height="31" fill="#ffff00"/>
<rect x="593" y="288" width="2" height="31" fill="#ffff00"/>
<rect x="596" y="288" width="1" height="31" fill="#ffff00"/>
<rect x="598" y="288" width="1" height="31" fill="#ffff00"/>
<rect x="601" y="288" width="2" height="31" fill="#ffff00"/>
<rect x="604" y="288" width="2" height="31" fill="#ffff00"/>
<rect x="609" y="288" width="2" height="31" fill="#ffff00"/>
<rect x="612" y="288" width="2" height="31" fill="#ffff00"/>
<rect x="616" y="288" width="1" height="31" fill="#ffff00"/>
<rect x="618" y="288" width="2" height="31" fill="#ffff00"/>
<rect x="621" y="288" width="1" height="31" fill="#ffff00"/>
<rect x="624" y="288" width="1" height="31" fill="#ffff00"/>
<rect x="626" y="288" width="2" height="31" fill="#ffff00"/>
<rect x="629" y="288" width="1" height="31" fill="#ffff00"/>
<rect x="635" y="288" width="1" height="31" fill="#ffff00"/>
<rect x="637" y="288" width="1" height="31" fill="#ffff00"/>
<rect x="640" y="288" width="2" height="31" fill="#ffff00"/>
<rect x="643" y="288" width="1" height="31" fill="#ffff00"/>
<rect x="645" y="288" width="1" height="31" fill="#ffff00"/>
<rect x="648" y="288" width="2" height="31" fill="#ffff00"/>
<rect x="651" y="288" width="2" height="31" fill="#ffff00"/>
<rect x="656" y="288" width="2" height="31" fill="#ffff00"/>
<rect x="659" y="288" width="2" height="31" fill="#ffff00"/>
<rect x="665" y="288" width="2" height="31" fill="#ffff00"/>
<rect x="668" y="288" width="1" height="31" fill="#ffff00"/>
<rect x="234" y="288" width="1" height="31" fill="#ffff00"/>
<rect x="236" y="288" width="2" height="31" fill="#ffff00"/>
<rect x="240" y="288" width="1" height="31" fill="#ffff00"/>
<rect x="242" y="288" width="1" height="31" fill="#ffff00"/>
<rect x="244" y="288" width="2" height="31" fill="#ffff00"/>
<rect x="248" y="288" width="1" height="31" fill="#ffff00"/>
<rect x="250" y="288" width="2" height="31" fill="#ffff00"/>
<rect x="253" y="288" width="1" height="31" fill="#ffff00"/>
<rect x="285" y="319" width="3" height="32" fill="#96e6f0"/>
<rect x="473" y="319" width="3" height="32" fill="#0ac8eb"/>
<rect x="660" y="319" width="3" height="32" fill="#96e6f0"/>
<rect x="458" y="351" width="1" height="31" fill="#00ff00"/>
<rect x="473" y="382" width="1" height="31" fill="#96e6f0"/>
<polygon fill="#fff" points="109,484 109,455 233,455 233,454 234,454 234,455 235,455 235,457 236,457 236,460 237,460 237,463 238,463 238,467 239,467 239,470 240,470 240,474 241,474 241,480 242,480 242,480 243,480 243,482 246,482 246,482 249,482 249,482 252,482 252,481 253,481 253,480 254,480 254,481 257,481 257,480 260,480 260,482 261,482 261,480 264,480 264,479 267,479 267,480 268,480 268,478 269,478 269,480 270,480 270,480 271,480 271,480 274,480 274,480 275,480 275,482 278,482 278,480 280,480 280,482 281,482 281,480 284,480 284,481 287,481 287,480 289,480 289,480 291,480 291,480 292,480 292,479 293,479 293,482 295,482 295,480 297,480 297,480 299,480 299,480 300,480 300,482 302,482 302,481 304,481 304,482 306,482 306,480 307,480 307,480 310,480 310,479 312,479 312,480 314,480 314,480 317,480 317,479 318,479 318,479 320,479 320,480 321,480 321,482 323,482 323,480 325,480 325,480 327,480 327,479 329,479 329,482 331,482 331,480 334,480 334,482 335,482 335,481 337,481 337,482 338,482 338,480 340,480 340,482 342,482 342,480 344,480 344,479 346,479 346,479 348,479 348,480 350,480 350,480 352,480 352,478 353,478 353,482 354,482 354,481 355,481 355,482 358,482 358,481 360,481 360,482 362,482 362,480 365,480 365,480 366,480 366,480 369,480 369,474 370,474 370,480 371,480 371,480 374,480 374,480 376,480 376,480 378,480 378,480 379,480 379,481 380,481 380,480 381,480 381,480 382,480 382,482 385,482 385,482 386,482 386,479 389,479 389,482 390,482 390,480 391,480 391,480 393,480 393,480 395,480 395,482 397,482 397,476 398,476 398,480 400,480 400,482 401,482 401,480 403,480 403,480 404,480 404,480 405,480 405,475 406,475 406,480 409,480 409,479 412,479 412,480 413,480 413,480 415,480 415,480 416,480 416,480 417,480 417,480 420,480 420,480 421,480 421,480 422,480 422,479 424,479 424,480 425,480 425,481 427,481 427,480 428,480 428,477 429,477 429,480 430,480 430,480 432,480 432,480 434,480 434,477 435,477 435,482 436,482 436,481 437,481 437,480 439,480 439,480 442,480 442,479 444,479 444,479 446,479 446,479 447,479 447,479 448,479 448,479 449,479 449,480 450,480 450,480 452,480 452,482 454,482 454,480 455,480 455,480 456,480 456,478 457,478 457,482 459,482 459,479 460,479 460,480 463,480 463,474 464,474 464,479 465,479 465,480 466,480 466,482 467,482 467,480 468,480 468,480 469,480 469,479 470,479 470,482 471,482 471,480 472,480 472,480 474,480 474,481 476,481 476,479 477,479 477,479 479,479 479,479 482,479 482,479 485,479 485,480 488,480 488,482 489,482 489,480 490,480 490,479 491,479 491,480 492,480 492,481 494,481 494,480 495,480 495,480 497,480 497,480 500,480 500,480 501,480 501,479 502,479 502,481 504,481 504,482 505,482 505,480 508,480 508,482 509,482 509,480 512,480 512,475 513,475 513,480 515,480 515,480 518,480 518,479 521,479 521,479 524,479 524,479 526,479 526,479 527,479 527,479 528,479 528,480 530,480 530,480 531,480 531,480 533,480 533,482 535,482 535,479 536,479 536,479 538,479 538,482 539,482 539,478 540,478 540,480 541,480 541,480 543,480 543,481 544,481 544,481 546,481 546,476 547,476 547,480 548,480 548,480 549,480 549,480 550,480 550,480 552,480 552,480 553,480 553,480 556,480 556,480 559,480 559,478 560,478 560,478 561,478 561,478 562,478 562,482 564,482 564,482 565,482 565,481 566,481 566,479 568,479 568,480 571,480 571,479 574,479 574,480 576,480 576,482 577,482 577,479 578,479 578,480 579,480 579,481 580,481 580,480 582,480 582,482 583,482 583,482 584,482 584,480 586,480 586,476 587,476 587,479 589,479 589,480 590,480 590,480 591,480 591,479 592,479 592,481 593,481 593,481 595,481 595,480 598,480 598,480 600,480 600,480 601,480 601,481 602,481 602,478 603,478 603,482 606,482 606,480 607,480 607,480 608,480 608,479 609,479 609,480 611,480 611,480 614,480 614,479 616,479 616,477 617,477 617,480 618,480 618,480 619,480 619,480 621,480 621,478 622,478 622,482 624,482 624,480 625,480 625,482 627,482 627,479 629,479 629,480 631,480 631,482 632,482 632,482 634,482 634,482 636,482 636,475 637,475 637,480 638,480 638,477 639,477 639,481 640,481 640,482 642,482 642,482 644,482 644,480 645,480 645,481 646,481 646,482 647,482 647,482 650,482 650,482 651,482 651,480 652,480 652,482 655,482 655,479 656,479 656,480 659,480 659,480 661,480 661,480 663,480 663,482 666,482 666,480 667,480 667,479 670,479 670,480 671,480 671,484"/>
<path fill="#ff0000" d="M241 483h2v1h-2zM245 483h5v1h-5zM252 483h1v1h-1zM258 483h5v1h-5zM268 483h2v1h-2zM271 483h1v1h-1zM273 483h2v1h-2zM277 483h3v1h-3zM281 483h4v1h-4zM290 483h4v1h-4zM296 483h1v1h-1zM299 483h1v1h-1zM302 483h5v1h-5zM309 483h2v1h-2zM312 483h3v1h-3zM316 483h4v1h-4zM325 483h1v1h-1zM328 483h5v1h-5zM335 483h1v1h-1zM338 483h5v1h-5zM344 483h4v1h-4zM349 483h1v1h-1zM355 483h3v1h-3zM359 483h2v1h-2zM362 483h4v1h-4zM367 483h4v1h-4zM372 483h4v1h-4zM378 483h3v1h-3zM386 483h1v1h-1zM389 483h2v1h-2zM392 483h5v1h-5zM398 483h3v1h-3zM402 483h3v1h-3zM407 483h5v1h-5zM413 483h1v1h-1zM415 483h1v1h-1zM417 483h3v1h-3zM422 483h1v1h-1zM425 483h2v1h-2zM429 483h4v1h-4zM434 483h5v1h-5zM440 483h4v1h-4zM445 483h4v1h-4zM454 483h1v1h-1zM457 483h2v1h-2zM460 483h1v1h-1zM462 483h1v1h-1zM464 483h4v1h-4zM469 483h5v1h-5zM475 483h3v1h-3zM479 483h2v1h-2zM482 483h1v1h-1zM485 483h1v1h-1zM487 483h5v1h-5zM493 483h3v1h-3zM497 483h5v1h-5zM507 483h5v1h-5zM513 483h1v1h-1zM516 483h3v1h-3zM520 483h4v1h-4zM525 483h4v1h-4zM530 483h2v1h-2zM533 483h4v1h-4zM539 483h4v1h-4zM544 483h3v1h-3zM549 483h2v1h-2zM552 483h3v1h-3zM556 483h3v1h-3zM560 483h3v1h-3zM564 483h3v1h-3zM572 483h3v1h-3zM580 483h4v1h-4zM585 483h2v1h-2zM589 483h1v1h-1zM592 483h3v1h-3zM596 483h3v1h-3zM600 483h4v1h-4zM605 483h5v1h-5zM611 483h3v1h-3zM615 483h3v1h-3zM623 483h1v1h-1zM625 483h1v1h-1zM627 483h3v1h-3zM632 483h2v1h-2zM635 483h3v1h-3zM639 483h5v1h-5zM645 483h2v1h-2zM652 483h3v1h-3zM660 483h4v1h-4zM665 483h4v1h-4z"/>
<rect x="108" y="19" width="1" height="465" fill="#fff"/>
<rect x="671" y="19" width="1" height="465" fill="#fff"/>
<rect x="108" y="19" width="564" height="1" fill="#fff"/>
<rect x="108" y="19" width="1" height="11" fill="#fff"/>
<rect x="147" y="19" width="1" height="6" fill="#fff"/>
<rect x="186" y="19" width="1" height="6" fill="#fff"/>
<rect x="225" y="19" width="1" height="6" fill="#fff"/>
<rect x="264" y="19" width="1" height="11" fill="#fff"/>
<rect x="303" y="19" width="1" height="6" fill="#fff"/>
<rect x="343" y="19" width="1" height="6" fill="#fff"/>
<rect x="382" y="19" width="1" height="6" fill="#fff"/>
<rect x="421" y="19" width="1" height="11" fill="#fff"/>
<rect x="460" y="19" width="1" height="6" fill="#fff"/>
<rect x="499" y="19" width="1" height="6" fill="#fff"/>
<rect x="538" y="19" width="1" height="6" fill="#fff"/>
<rect x="577" y="19" width="1" height="11" fill="#fff"/>
<rect x="616" y="19" width="1" height="6" fill="#fff"/>
<rect x="655" y="19" width="1" height="6" fill="#fff"/>
</g>
<g style="filter:grayscale(1)">
<text x="91.5" y="14" textLength="32" lengthAdjust="spacing">00:00</text>
<text x="91.5" y="502" textLength="32" lengthAdjust="spacing">00:00</text>
<text x="247.9" y="14" textLength="32" lengthAdjust="spacing">20:00</text>
<text x="247.9" y="502" textLength="32" lengthAdjust="spacing">20:00</text>
<text x="404.3" y="14" textLength="32" lengthAdjust="spacing">16:00</text>
<text x="404.3" y="502" textLength="32" lengthAdjust="spacing">16:00</text>
<text x="560.7" y="14" textLength="32" lengthAdjust="spacing">12:00</text>
<text x="560.7" y="502" textLength="32" lengthAdjust="spacing">12:00</text>
<text y="518"><tspan x="308.3" textLength="75.5" lengthAdjust="spacing">2002/07/10</tspan> <tspan x="391.6" textLength="79.4" lengthAdjust="spacing">00:00:00.000</tspan></text>
<text x="18" y="62" textLength="77" lengthAdjust="spacing">TM SUBMODE</text>
<text x="7.5" y="109" textLength="94" lengthAdjust="spacing">LASCO/EIT (OP)</text>
<text x="107" y="38.5" text-anchor="end">5</text>
<text x="107" y="48" text-anchor="end">4</text>
<text x="107" y="57.3" text-anchor="end">3</text>
<text x="107" y="66.6" text-anchor="end">2</text>
<text x="107" y="76" text-anchor="end">1</text>
<text x="49" y="153" textLength="52.5" lengthAdjust="spacing">OS_3092</text>
<text x="49" y="184" textLength="52.5" lengthAdjust="spacing">OS_3342</text>
<text x="49" y="215" textLength="52.5" lengthAdjust="spacing">OS_3389</text>
<text x="49" y="247" textLength="52.5" lengthAdjust="spacing">OS_3390</text>
<text x="49" y="278" textLength="52.5" lengthAdjust="spacing">OS_3405</text>
<text x="49" y="309" textLength="52.5" lengthAdjust="spacing">OS_3406</text>
<text x="49" y="340" textLength="52.5" lengthAdjust="spacing">OS_3532</text>
<text x="49" y="372" textLength="52.5" lengthAdjust="spacing">OS_3568</text>
<text x="49" y="403" textLength="52.5" lengthAdjust="spacing">OS_3570</text>
<text x="7.5" y="453" textLength="82.5" lengthAdjust="spacing">LASCO-buffer</text>
<text x="107" y="432" text-anchor="end" textLength="20" lengthAdjust="spacing">100</text>
<text x="107" y="444" text-anchor="end" textLength="14" lengthAdjust="spacing">80</text>
<text x="107" y="477" text-anchor="end" textLength="14" lengthAdjust="spacing">20</text>
<text x="107" y="488" text-anchor="end">0</text>
</g>
<g>
<text x="13.8" y="520.5" textLength="10.5" lengthAdjust="spacingAndGlyphs" style="fill:#ff0000;font-size:10px">C1</text>
<text x="35" y="520.5" textLength="12" lengthAdjust="spacingAndGlyphs" style="fill:#00ff00;font-size:10px">C2</text>
<text x="56" y="520.5" textLength="12" lengthAdjust="spacingAndGlyphs" style="fill:#96e6f0;font-size:10px">C3</text>
<text x="77" y="520.5" textLength="13" lengthAdjust="spacingAndGlyphs" style="fill:#ffff00;font-size:10px">EIT</text>
</g>
</svg></body></html>
